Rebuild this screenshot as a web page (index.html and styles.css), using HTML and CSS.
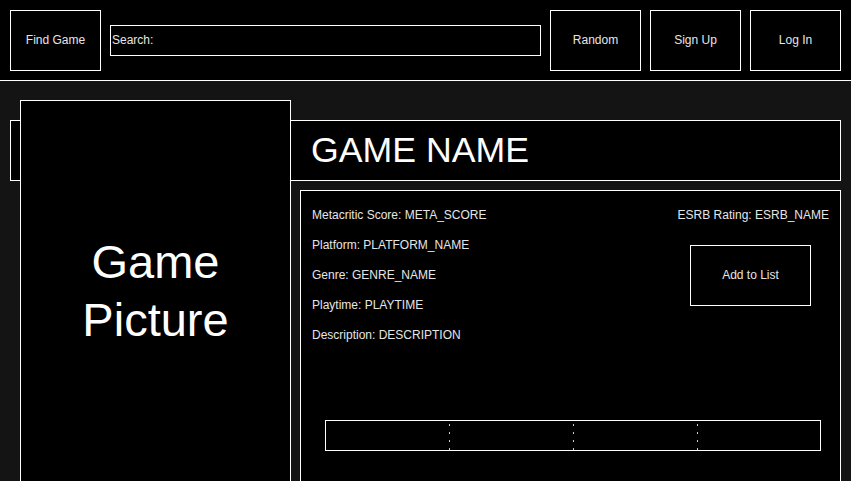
FILE: index.html
```html
<!DOCTYPE html>
<html>
<head>
<meta charset="utf-8">
<link rel="stylesheet" href="styles.css">
</head>
<body>
<header class="topbar">
  <div class="nav-btn">Find Game</div>
  <div class="search">Search:</div>
  <div class="nav-btn">Random</div>
  <div class="nav-btn">Sign Up</div>
  <div class="nav-btn">Log In</div>
</header>
<main class="game">
  <div class="picture">Game<br>Picture</div>
  <div class="title">GAME NAME</div>
  <section class="details">
    <div class="info-row">
      <div class="info-list">
        <p>Metacritic Score: META_SCORE</p>
        <p>Platform: PLATFORM_NAME</p>
        <p>Genre: GENRE_NAME</p>
        <p>Playtime: PLAYTIME</p>
        <p>Description: DESCRIPTION</p>
      </div>
      <div class="info-side">
        <p>ESRB Rating: ESRB_NAME</p>
        <div class="add-btn">Add to List</div>
      </div>
    </div>
    <div class="rating-bar">
      <div class="seg"></div>
      <div class="seg"></div>
      <div class="seg"></div>
      <div class="seg"></div>
    </div>
  </section>
</main>
</body>
</html>
```
FILE: styles.css
```css
* { box-sizing: border-box; }
html, body {
  margin: 0;
  padding: 0;
  height: 100%;
  overflow: hidden;
}
body {
  background: #141414;
  font-family: "Liberation Sans", Arial, sans-serif;
  font-size: 12px;
  color: #e6e6e6;
}
.topbar {
  background: #000;
  border-bottom: 1px solid #fff;
  display: flex;
  align-items: center;
  gap: 9px;
  padding: 10px 10px 9px 10px;
  height: 81px;
}
.nav-btn {
  width: 91px;
  height: 61px;
  border: 1px solid #fff;
  display: flex;
  align-items: center;
  justify-content: center;
  padding-bottom: 2px;
  flex: none;
}
.search {
  width: 431px;
  height: 31px;
  border: 1px solid #fff;
  display: flex;
  align-items: center;
  padding-left: 1px;
  padding-bottom: 2px;
  flex: none;
}
.game {
  display: grid;
  grid-template-columns: 10px 271px 9px 541px;
  grid-template-rows: 20px 61px 9px auto;
  padding: 19px 10px 0 10px;
}
.picture {
  grid-column: 2;
  grid-row: 1 / 5;
  z-index: 1;
  height: 384px;
  background: #000;
  border: 1px solid #fff;
  display: flex;
  align-items: center;
  justify-content: center;
  text-align: center;
  font-size: 47px;
  line-height: 58px;
  color: #fff;
  padding-bottom: 2px;
}
.title {
  grid-column: 1 / -1;
  grid-row: 2;
  background: #000;
  border: 1px solid #fff;
  display: flex;
  align-items: center;
  padding-left: 300px;
  font-size: 35.7px;
  color: #fff;
}
.details {
  grid-column: 4;
  grid-row: 4;
  height: 300px;
  background: #000;
  border: 1px solid #fff;
  padding: 9px 11px 0 11px;
}
.details p {
  margin: 0;
  line-height: 30px;
  white-space: nowrap;
}
.info-row {
  display: flex;
  justify-content: space-between;
  height: 150px;
}
.info-side {
  display: flex;
  flex-direction: column;
  align-items: flex-end;
}
.add-btn {
  margin-top: 15px;
  margin-right: 18px;
  width: 121px;
  height: 61px;
  border: 1px solid #fff;
  display: flex;
  align-items: center;
  justify-content: center;
  padding-bottom: 1px;
}
.rating-bar {
  margin: 70px 8px 0 13px;
  height: 31px;
  border: 1px solid #fff;
  display: grid;
  grid-template-columns: 123px 124px 124px 123px;
}
.seg + .seg {
  background: repeating-linear-gradient(to bottom, transparent 0 3px, #c8c8c8 3px 5px, transparent 5px 8px) left top / 1px 100% no-repeat;
}
```
